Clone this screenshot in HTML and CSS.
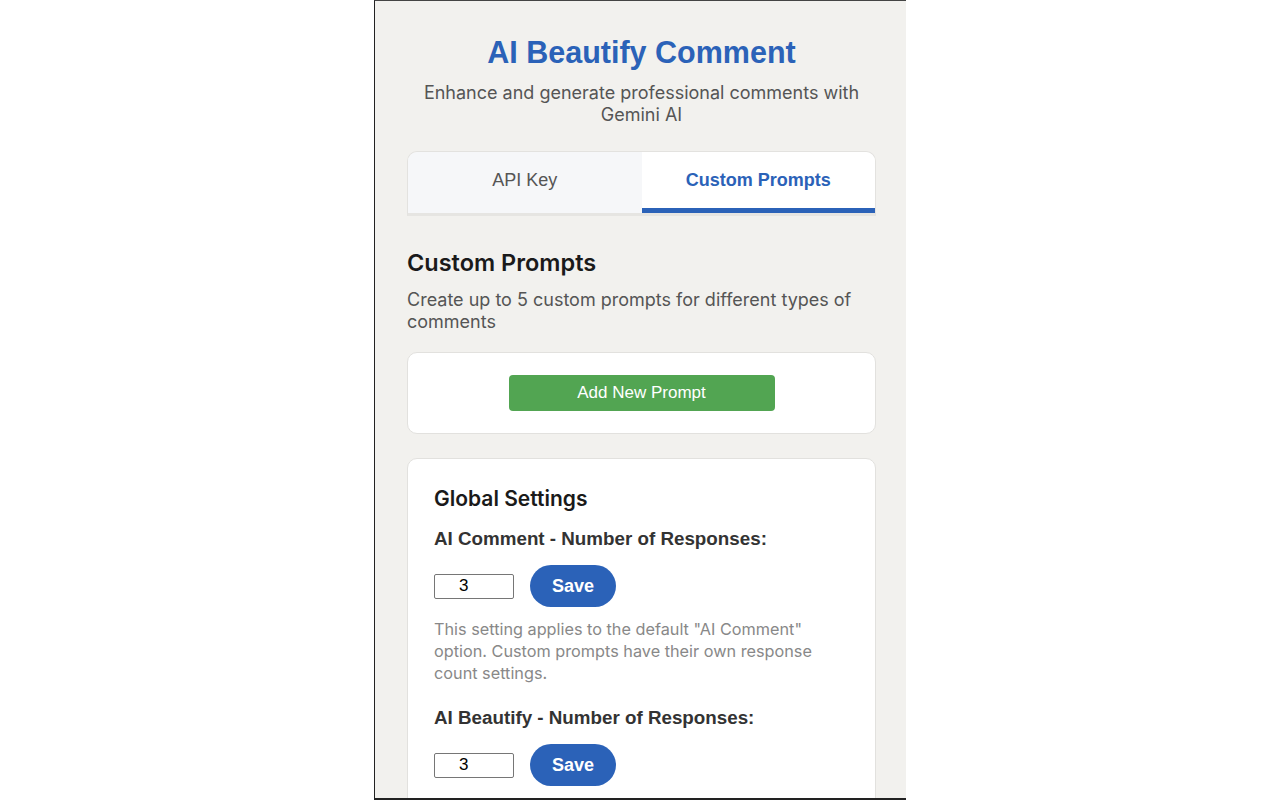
FILE: index.html
```html
<!DOCTYPE html>
<html>
<head>
<meta charset="utf-8">
<link rel="stylesheet" href="styles.css">
</head>
<body>
<div class="popup">
  <header class="header">
    <h1 class="title">AI Beautify Comment</h1>
    <p class="subtitle">Enhance and generate professional comments with Gemini AI</p>
  </header>
  <div class="tabs">
    <div class="tab">API Key</div>
    <div class="tab active">Custom Prompts</div>
  </div>
  <section class="section">
    <h2 class="section-title">Custom Prompts</h2>
    <p class="section-desc">Create up to 5 custom prompts for different types of comments</p>
    <div class="card card-center">
      <button class="btn-green">Add New Prompt</button>
    </div>
    <div class="card card-settings">
      <h3 class="settings-title">Global Settings</h3>
      <div class="setting">
        <label class="setting-label">AI Comment - Number of Responses:</label>
        <div class="setting-row">
          <input class="num-input" type="text" value="3">
          <button class="btn-save">Save</button>
        </div>
        <p class="help">This setting applies to the default "AI Comment" option. Custom prompts have their own response count settings.</p>
      </div>
      <div class="setting">
        <label class="setting-label">AI Beautify - Number of Responses:</label>
        <div class="setting-row">
          <input class="num-input" type="text" value="3">
          <button class="btn-save">Save</button>
        </div>
      </div>
    </div>
  </section>
</div>
</body>
</html>
```

FILE: styles.css
```css
html, body {
  margin: 0;
  padding: 0;
  background: #ffffff;
  height: 800px;
  overflow: hidden;
}
body {
  display: flex;
  justify-content: center;
}
.popup {
  width: 532px;
  height: 800px;
  box-sizing: border-box;
  background: #f2f1ee;
  border-left: 1px solid #222;
  border-top: 1px solid #444;
  border-bottom: 2px solid #222;
  padding: 0 30px 0 32px;
  overflow: hidden;
  font-family: Inter, "Liberation Sans", sans-serif;
}
.header {
  text-align: center;
  padding-top: 32px;
}
.title {
  margin: 0;
  font-family: "Liberation Sans", Arial, sans-serif;
  font-weight: 700;
  font-size: 30.5px;
  line-height: 38px;
  color: #2b62b8;
}
.subtitle {
  margin: 11px 0 0;
  font-size: 18px;
  line-height: 22px;
  color: #555;
  padding: 0 8px;
}
.tabs {
  margin-top: 25px;
  display: flex;
  height: 65px;
  box-sizing: border-box;
  border: 1px solid #e3e2df;
  border-bottom: 3px solid #e6e5e2;
  border-radius: 10px 10px 0 0;
  overflow: hidden;
}
.tab {
  flex: 1;
  display: flex;
  align-items: center;
  justify-content: center;
  font-family: "Liberation Sans", Arial, sans-serif;
  font-size: 18px;
  color: #555;
  background: #f6f7f9;
  box-sizing: border-box;
  border-bottom: 5px solid transparent;
  padding-top: 1px;
}
.tab.active {
  background: #fff;
  color: #2b62b8;
  font-weight: 700;
  border-bottom-color: #2b62b8;
}
.section {
  padding-top: 33px;
}
.section-title {
  margin: 0;
  font-size: 23.5px;
  line-height: 28px;
  font-weight: 600;
  color: #1a1a1a;
}
.section-desc {
  margin: 12px 0 0;
  font-size: 18px;
  line-height: 22px;
  color: #555;
}
.card {
  background: #fff;
  border: 1px solid #e2e1de;
  border-radius: 10px;
  box-sizing: border-box;
}
.card-center {
  margin-top: 19px;
  height: 82px;
  display: flex;
  align-items: center;
  justify-content: center;
}
.btn-green {
  width: 266px;
  height: 36px;
  border: none;
  border-radius: 4px;
  background: #52a552;
  color: #fff;
  font-family: "Liberation Sans", Arial, sans-serif;
  font-size: 17px;
}
.card-settings {
  margin-top: 24px;
  padding: 27px 26px 30px;
}
.settings-title {
  margin: 0;
  font-size: 21px;
  line-height: 26px;
  font-weight: 600;
  color: #1a1a1a;
}
.setting {
  margin-top: 14px;
}
.setting + .setting {
  margin-top: 21px;
}
.setting-label {
  display: block;
  font-family: "Liberation Sans", Arial, sans-serif;
  font-weight: 700;
  font-size: 18.8px;
  line-height: 26px;
  color: #333;
}
.setting-row {
  margin-top: 13px;
  display: flex;
  align-items: center;
  gap: 16px;
}
.num-input {
  width: 80px;
  height: 25px;
  box-sizing: border-box;
  border: 1px solid #767676;
  border-radius: 2px;
  padding: 0 0 0 24px;
  font-family: "Liberation Sans", Arial, sans-serif;
  font-size: 17px;
  color: #000;
  background: #fff;
}
.btn-save {
  width: 86px;
  height: 42px;
  border: none;
  border-radius: 21px;
  background: #2b62b8;
  color: #fff;
  font-family: "Liberation Sans", Arial, sans-serif;
  font-weight: 700;
  font-size: 18px;
}
.help {
  margin: 11px 0 0;
  font-size: 16.25px;
  line-height: 22px;
  color: #888;
}
```
